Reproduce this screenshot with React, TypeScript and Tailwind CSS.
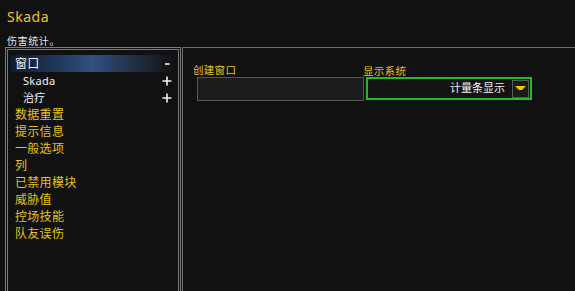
import React from "react";

const FONT = { fontFamily: '"Noto Sans", "Noto Sans CJK SC", sans-serif' };

interface MenuItem {
  label: string;
  sub?: boolean;
  toggle?: "+" | "-";
  selected?: boolean;
  white?: boolean;
}

const MENU: MenuItem[] = [
  { label: "窗口", toggle: "-", selected: true, white: true },
  { label: "Skada", sub: true, toggle: "+", white: true },
  { label: "治疗", sub: true, toggle: "+", white: true },
  { label: "数据重置" },
  { label: "提示信息" },
  { label: "一般选项" },
  { label: "列" },
  { label: "已禁用模块" },
  { label: "威胁值" },
  { label: "控场技能" },
  { label: "队友误伤" },
];

const Toggle = ({ kind }: { kind: "+" | "-" }) => (
  <svg width="10" height="10" viewBox="0 0 10 10" className="shrink-0">
    {kind === "+" ? (
      <path d="M0.5 5 H9.5 M5 0.5 V9.5" stroke="#f2f2f2" strokeWidth="1.6" />
    ) : (
      <path d="M3 5 H7.5" stroke="#f2f2f2" strokeWidth="1.6" />
    )}
  </svg>
);

export default function App() {
  return (
    <div
      className="w-[575px] h-[291px] bg-[#111111] overflow-hidden flex flex-col"
      style={FONT}
    >
      <div className="px-[7px] pt-[7px] h-[47px] shrink-0">
        <div className="text-[14px] leading-[20px] text-[#f0c419] tracking-[0.5px]">
          Skada
        </div>
        <div className="text-[10px] leading-[14px] mt-[7px] text-[#e6e6e6] tracking-[0.6px]">
          伤害统计。
        </div>
      </div>

      <div className="flex flex-1 pl-[5px] gap-[1px]">
        <div className="w-[176px] shrink-0 border-[3px] border-double border-b-0 border-[#7a7a7a] pt-[5px] px-[2px]">
          {MENU.map((item) => (
            <div
              key={item.label}
              className={`h-[17px] flex items-center justify-between pr-[4px] ${
                item.selected
                  ? "bg-gradient-to-r from-[#101a2e] via-[#30507f] to-[#111111]"
                  : ""
              } ${item.sub ? "pl-[13px]" : "pl-[5px]"}`}
            >
              <span
                className={`${item.sub ? "text-[11px]" : "text-[12px]"} leading-[15px] tracking-[0.3px] ${
                  item.white ? "text-[#f2f2f2]" : "text-[#e8c21a]"
                }`}
              >
                {item.label}
              </span>
              {item.toggle && <Toggle kind={item.toggle} />}
            </div>
          ))}
        </div>

        <div className="flex-1 border-l border-t border-[#6e6e6e] -mr-[4px] pt-[16px] pl-[10px]">
          <div className="flex items-start">
            <div className="flex flex-col">
              <span className="text-[10.5px] leading-[13px] text-[#e8c21a] tracking-[0.3px]">
                创建窗口
              </span>
              <div className="ml-[4px] w-[167px] h-[24px] bg-[#1c1c1c] border border-[#555555]" />
            </div>
            <div className="flex flex-col">
              <span className="text-[10.5px] leading-[13px] text-[#e8c21a] tracking-[0.3px] -ml-[1px] mt-[1px] -mb-[1px]">
                显示系统
              </span>
              <div className="ml-[2px] w-[166px] h-[23px] border-2 border-[#1fbd1f] bg-[#131313] flex items-center justify-end pr-[1px]">
                <span className="text-[11px] text-[#f2f2f2] mr-[7px]">计量条显示</span>
                <div className="w-[17px] h-[18px] border border-[#5a5a5a] bg-[#1a1a1a] flex items-center justify-center">
                  <svg width="11" height="5" viewBox="0 0 11 5">
                    <path d="M0 0 H11 L7 4 H4 Z" fill="#f5c400" />
                  </svg>
                </div>
              </div>
            </div>
          </div>
        </div>
      </div>
    </div>
  );
}
